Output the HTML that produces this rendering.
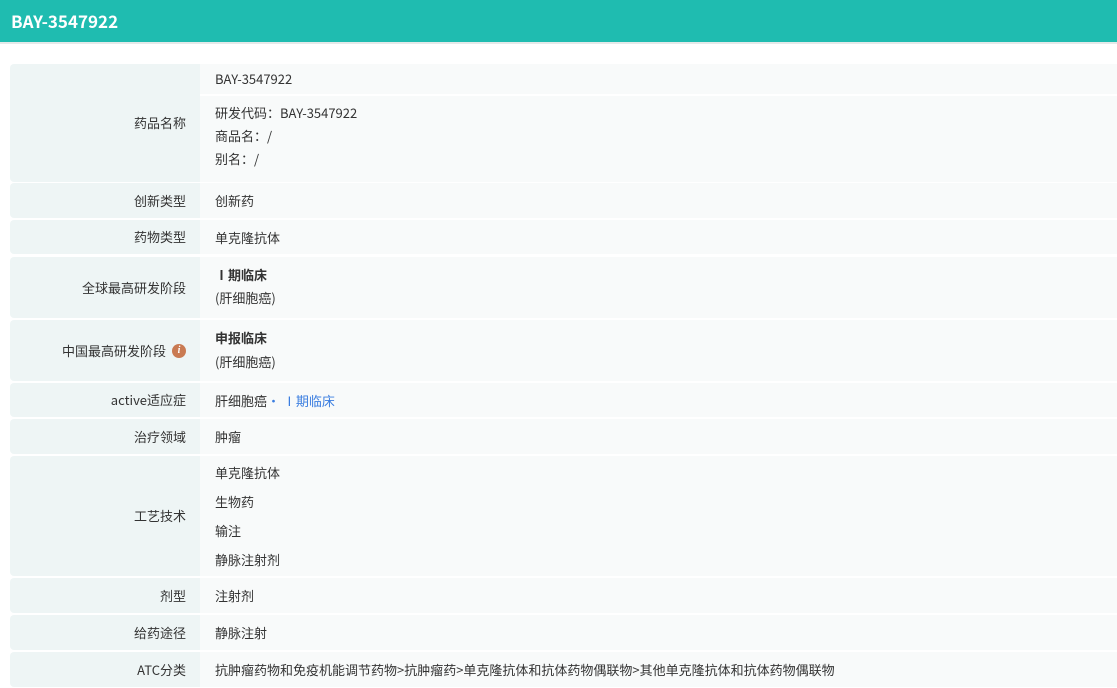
<!DOCTYPE html>
<html><head><meta charset="utf-8"><style>
*{margin:0;padding:0;box-sizing:border-box}
body{width:1117px;height:688px;background:#fff;font-family:"Noto Sans CJK SC","Liberation Sans",sans-serif;font-size:13px;line-height:18px;color:#333;position:relative;overflow:hidden}
.hd{position:absolute;left:0;top:0;width:1117px;height:42px;background:#1fbcb0;color:#fff;font-weight:bold;font-size:17px;line-height:42px;padding-left:11px}
.hl{position:absolute;left:0;top:42px;width:1117px;height:2px;background:#e4e9e9}
.row{position:absolute;left:10px;width:1107px}
.lb{position:absolute;left:0;top:0;bottom:0;width:190px;background:#eef5f5;border-radius:4px 0 0 4px;display:flex;align-items:center;justify-content:flex-end;padding-right:14px}
.vl{position:absolute;left:190px;top:0;bottom:0;right:0;background:#f8fafa}
.t{position:absolute;left:15px;white-space:nowrap}
.i{display:inline-block;width:14px;height:14px;border-radius:50%;background:#c97a52;color:#fff;font-size:10px;font-style:italic;font-weight:bold;text-align:center;line-height:14px;margin-left:6px;font-family:"Liberation Serif",serif}
b{font-weight:bold}
.blue{color:#3a7de0}
</style></head><body>
<div class="hd">BAY-3547922</div><div class="hl"></div>

<div class="row" style="top:64px;height:118px"><div class="lb">药品名称</div><div class="vl">
<div style="position:absolute;left:0;right:0;top:30px;height:2px;background:#fff"></div>
<span class="t" style="top:6px">BAY-3547922</span>
<span class="t" style="top:40px">研发代码：BAY-3547922</span>
<span class="t" style="top:63px">商品名：/</span>
<span class="t" style="top:86px">别名：/</span></div></div>

<div class="row" style="top:183px;height:35px"><div class="lb">创新类型</div><div class="vl"><span class="t" style="top:9px">创新药</span></div></div>
<div class="row" style="top:220px;height:34px"><div class="lb">药物类型</div><div class="vl"><span class="t" style="top:9px">单克隆抗体</span></div></div>
<div class="row" style="top:257px;height:61px"><div class="lb">全球最高研发阶段</div><div class="vl"><span class="t" style="top:9px"><b>Ⅰ期临床</b></span><span class="t" style="top:32px">(肝细胞癌)</span></div></div>
<div class="row" style="top:320px;height:61px"><div class="lb">中国最高研发阶段<span class="i">i</span></div><div class="vl"><span class="t" style="top:9px"><b>申报临床</b></span><span class="t" style="top:33px">(肝细胞癌)</span></div></div>
<div class="row" style="top:383px;height:34px"><div class="lb">active适应症</div><div class="vl"><span class="t" style="top:9px">肝细胞癌<span class="blue">• Ⅰ期临床</span></span></div></div>
<div class="row" style="top:419px;height:35px"><div class="lb">治疗领域</div><div class="vl"><span class="t" style="top:9px">肿瘤</span></div></div>
<div class="row" style="top:456px;height:120px"><div class="lb">工艺技术</div><div class="vl">
<span class="t" style="top:8px">单克隆抗体</span><span class="t" style="top:37px">生物药</span><span class="t" style="top:66px">输注</span><span class="t" style="top:95px">静脉注射剂</span></div></div>
<div class="row" style="top:578px;height:35px"><div class="lb">剂型</div><div class="vl"><span class="t" style="top:9px">注射剂</span></div></div>
<div class="row" style="top:615px;height:35px"><div class="lb">给药途径</div><div class="vl"><span class="t" style="top:9px">静脉注射</span></div></div>
<div class="row" style="top:652px;height:35px"><div class="lb">ATC分类</div><div class="vl"><span class="t" style="top:9px">抗肿瘤药物和免疫机能调节药物&gt;抗肿瘤药&gt;单克隆抗体和抗体药物偶联物&gt;其他单克隆抗体和抗体药物偶联物</span></div></div>
</body></html>
